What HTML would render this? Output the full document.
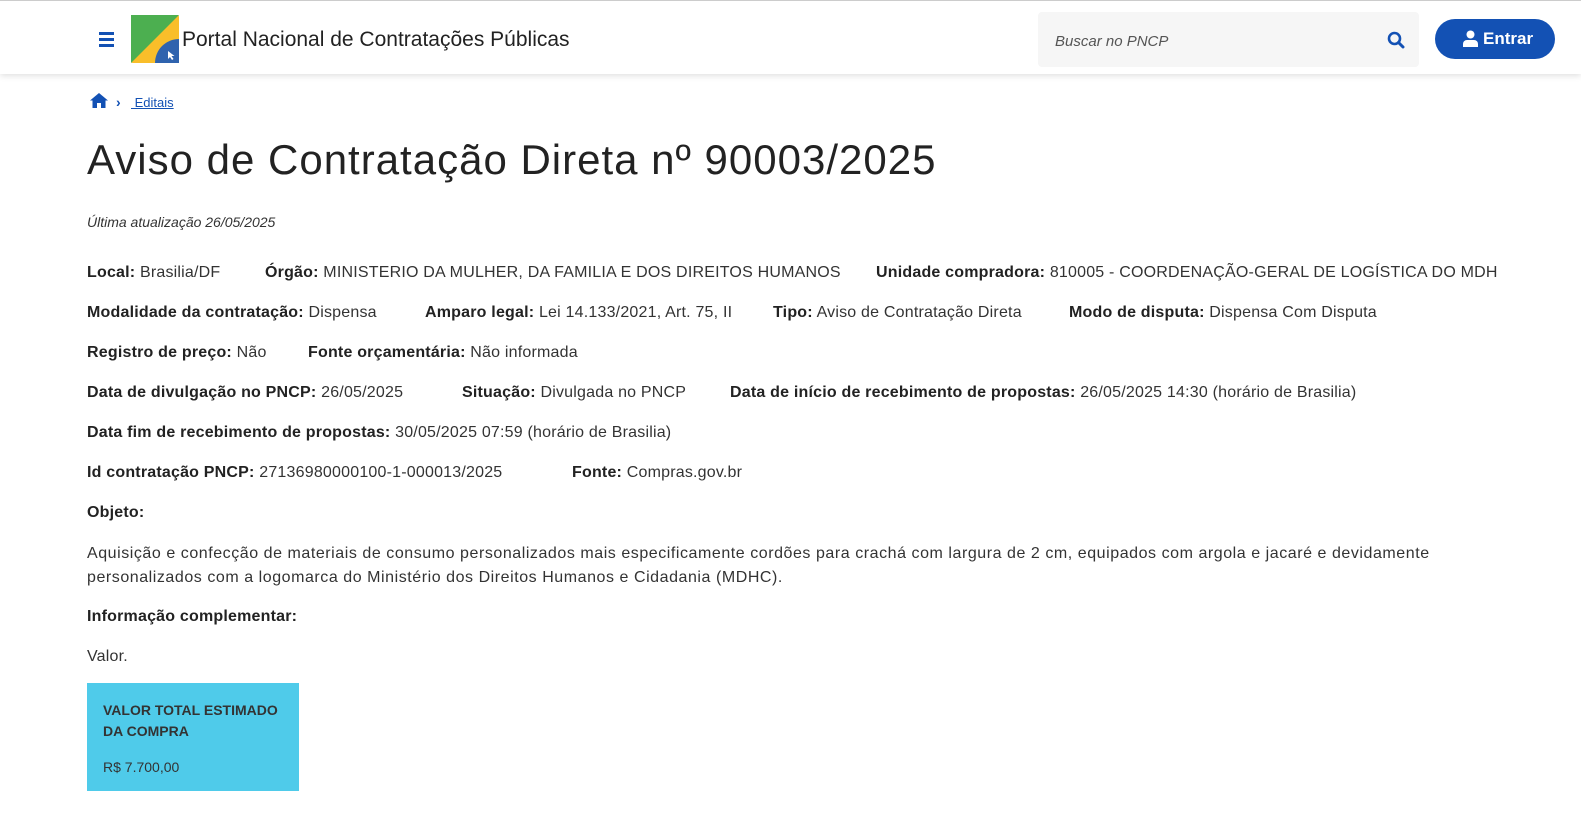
<!DOCTYPE html>
<html><head><meta charset="utf-8"><style>
*{margin:0;padding:0;box-sizing:border-box}
body{width:1581px;height:834px;background:#fff;font-family:"Liberation Sans",sans-serif;color:#333;position:relative;overflow:hidden}
.hdr{position:absolute;left:0;top:0;width:1581px;height:74px;border-top:1px solid #ccc;box-shadow:0 2px 6px rgba(0,0,0,.12);background:#fff}
.a{position:absolute;white-space:nowrap;font-size:16px;line-height:20px}
.r{letter-spacing:0.2px}
b{font-weight:bold;color:#222}
</style></head><body>
<div class="hdr">
  <div style="position:absolute;left:99px;top:31px;width:15px">
    <div style="height:2.5px;background:#1351b4;margin-bottom:3.5px"></div>
    <div style="height:2.5px;background:#1351b4;margin-bottom:3.5px"></div>
    <div style="height:2.5px;background:#1351b4"></div>
  </div>
  <svg style="position:absolute;left:131px;top:14px" width="48" height="48" viewBox="0 0 48 48">
    <rect width="48" height="48" rx="2" fill="#f9be2a"/>
    <path d="M0 0H48L0 48Z" fill="#4caf50"/>
    <path d="M24 48A24 24 0 0 1 48 24V48Z" fill="#2f63ae"/>
    <path d="M37 36l0 8 2-2 2 3 1.5-1-2-3 3 0z" fill="#fff"/>
  </svg>
  <div class="a" style="left:182px;top:26px;font-size:21px;line-height:26px;color:#222">Portal Nacional de Contratações Públicas</div>
  <div style="position:absolute;left:1038px;top:11px;width:381px;height:55px;background:#f6f6f6;border-radius:4px"></div>
  <div class="a" style="left:1055px;top:31px;font-size:15px;font-style:italic;color:#555">Buscar no PNCP</div>
  <svg style="position:absolute;left:1387px;top:30px" width="18" height="18" viewBox="0 0 18 18"><circle cx="7.5" cy="7.5" r="5.5" fill="none" stroke="#1351b4" stroke-width="2.6"/><path d="M11.5 11.5L16 16" stroke="#1351b4" stroke-width="3" stroke-linecap="round"/></svg>
  <div style="position:absolute;left:1435px;top:18px;width:120px;height:40px;background:#1351b4;border-radius:20px"></div>
  <svg style="position:absolute;left:1463px;top:29px" width="15" height="17" viewBox="0 0 15 17"><circle cx="7.5" cy="4.5" r="4" fill="#fff"/><path d="M0 17v-3a4 4 0 0 1 4-4h7a4 4 0 0 1 4 4v3z" fill="#fff"/></svg>
  <div class="a" style="left:1483px;top:28px;font-size:17px;font-weight:bold;color:#fff">Entrar</div>
</div>
<svg style="position:absolute;left:90px;top:92px" width="18" height="16" viewBox="0 0 18 16"><path d="M9 1L0 8.5h2.5V16h4.5v-5h4v5h4.5V8.5H18z" fill="#1351b4"/></svg>
<div class="a" style="left:116px;top:92px;color:#1351b4;font-size:14px;font-weight:bold">›</div>
<div class="a" style="left:131px;top:93px;font-size:13px;color:#1351b4;text-decoration:underline">&nbsp;Editais</div>
<div class="a" style="left:87px;top:135px;font-size:42px;line-height:50px;color:#222;letter-spacing:1px">Aviso de Contratação Direta nº 90003/2025</div>
<div class="a" style="left:87px;top:212px;font-size:14px;font-style:italic;color:#333">Última atualização 26/05/2025</div>

<div class="a r" style="left:87px;top:263px"><b>Local:</b> Brasilia/DF</div>
<div class="a r" style="left:265px;top:263px"><b>Órgão:</b> MINISTERIO DA MULHER, DA FAMILIA E DOS DIREITOS HUMANOS</div>
<div class="a r" style="left:876px;top:263px"><b>Unidade compradora:</b> 810005 - COORDENAÇÃO-GERAL DE LOGÍSTICA DO MDH</div>

<div class="a r" style="left:87px;top:303px"><b>Modalidade da contratação:</b> Dispensa</div>
<div class="a r" style="left:425px;top:303px"><b>Amparo legal:</b> Lei 14.133/2021, Art. 75, II</div>
<div class="a r" style="left:773px;top:303px"><b>Tipo:</b> Aviso de Contratação Direta</div>
<div class="a r" style="left:1069px;top:303px"><b>Modo de disputa:</b> Dispensa Com Disputa</div>

<div class="a r" style="left:87px;top:343px"><b>Registro de preço:</b> Não</div>
<div class="a r" style="left:308px;top:343px"><b>Fonte orçamentária:</b> Não informada</div>

<div class="a r" style="left:87px;top:383px"><b>Data de divulgação no PNCP:</b> 26/05/2025</div>
<div class="a r" style="left:462px;top:383px"><b>Situação:</b> Divulgada no PNCP</div>
<div class="a r" style="left:730px;top:383px"><b>Data de início de recebimento de propostas:</b> 26/05/2025 14:30 (horário de Brasilia)</div>

<div class="a r" style="left:87px;top:423px"><b>Data fim de recebimento de propostas:</b> 30/05/2025 07:59 (horário de Brasilia)</div>

<div class="a r" style="left:87px;top:463px"><b>Id contratação PNCP:</b> 27136980000100-1-000013/2025</div>
<div class="a r" style="left:572px;top:463px"><b>Fonte:</b> Compras.gov.br</div>

<div class="a r" style="left:87px;top:503px"><b>Objeto:</b></div>
<div class="a" style="left:87px;top:542px;line-height:24px;letter-spacing:0.55px">Aquisição e confecção de materiais de consumo personalizados mais especificamente cordões para crachá com largura de 2 cm, equipados com argola e jacaré e devidamente</div>
<div class="a" style="left:87px;top:566px;line-height:24px;letter-spacing:0.55px">personalizados com a logomarca do Ministério dos Direitos Humanos e Cidadania (MDHC).</div>
<div class="a r" style="left:87px;top:607px"><b>Informação complementar:</b></div>
<div class="a r" style="left:87px;top:647px">Valor.</div>

<div style="position:absolute;left:87px;top:683px;width:212px;height:108px;background:#4fcbea"></div>
<div class="a" style="left:103px;top:700px;font-size:14px;line-height:21px;font-weight:bold;color:#333;white-space:normal;width:180px">VALOR TOTAL ESTIMADO DA COMPRA</div>
<div class="a" style="left:103px;top:757px;font-size:14px;color:#333">R$ 7.700,00</div>
</body></html>
